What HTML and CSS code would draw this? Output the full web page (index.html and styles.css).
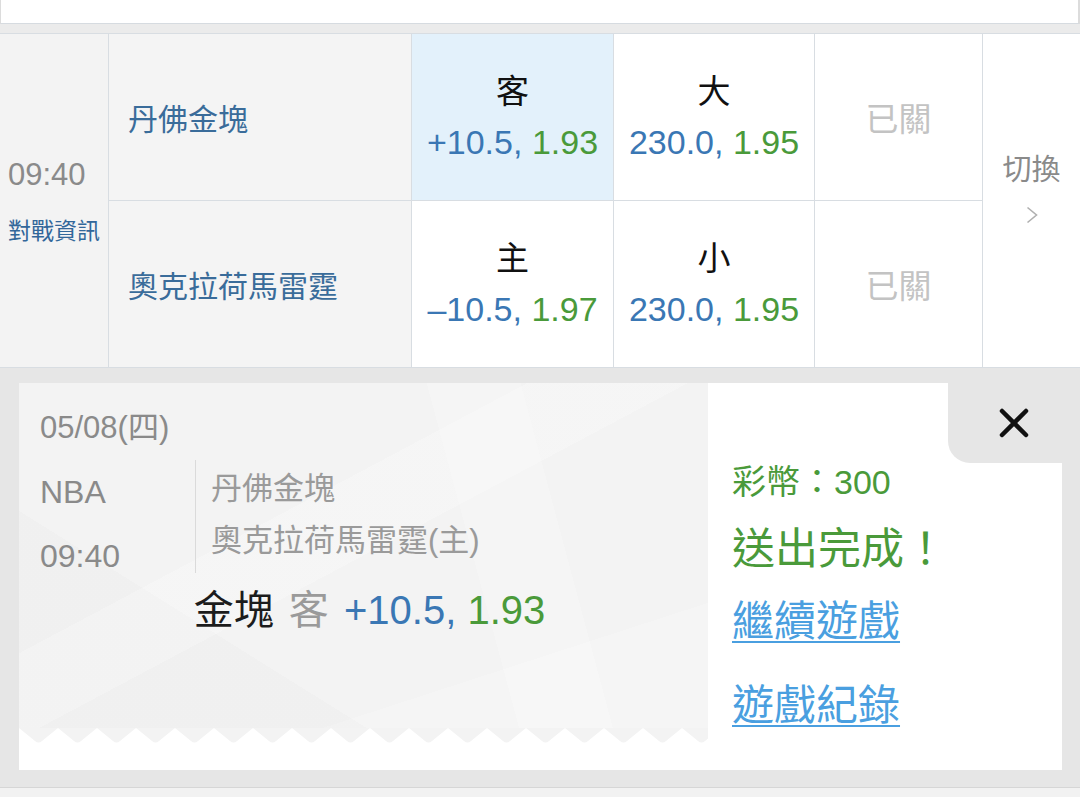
FILE: index.html
```html
<!DOCTYPE html>
<html>
<head>
<meta charset="utf-8">
<title>NBA 投注</title>
<link rel="stylesheet" href="styles.css">
</head>
<body>
<div class="page">
  <div class="prev-row"></div>
  <div class="gap-strip"></div>

  <div class="match">
    <div class="cell time-cell">
      <div class="time">09:40</div>
      <div class="info-link">對戰資訊</div>
    </div>
    <div class="cell team">丹佛金塊</div>
    <div class="cell odds picked">
      <div class="side">客</div>
      <div class="line"><span class="num">+10.5,</span> <span class="price">1.93</span></div>
    </div>
    <div class="cell odds">
      <div class="side">大</div>
      <div class="line"><span class="num">230.0,</span> <span class="price">1.95</span></div>
    </div>
    <div class="cell closed">已關</div>
    <div class="cell switch">
      <div class="switch-text">切換</div>
      <svg class="chevron" width="12" height="18" viewBox="0 0 12 18"><polyline points="1.5,1.5 10.5,9 1.5,16.5" fill="none" stroke="#b0b0b0" stroke-width="1.6"/></svg>
    </div>

    <div class="cell team">奧克拉荷馬雷霆</div>
    <div class="cell odds">
      <div class="side">主</div>
      <div class="line"><span class="num">&ndash;10.5,</span> <span class="price">1.97</span></div>
    </div>
    <div class="cell odds">
      <div class="side">小</div>
      <div class="line"><span class="num">230.0,</span> <span class="price">1.95</span></div>
    </div>
    <div class="cell closed">已關</div>
  </div>

  <div class="ticket-area">
    <div class="ticket">
      <div class="ticket-main">
        <div class="ticket-body">
          <div class="ticket-date">05/08(四)</div>
          <div class="ticket-info">
            <div class="ticket-meta">
              <div>NBA</div>
              <div>09:40</div>
            </div>
            <div class="ticket-teams">
              <div>丹佛金塊</div>
              <div>奧克拉荷馬雷霆(主)</div>
            </div>
          </div>
          <div class="ticket-pick">
            <span class="pick-team">金塊</span>
            <span class="pick-side">客</span>
            <span class="num">+10.5,</span> <span class="price">1.93</span>
          </div>
        </div>
        <svg class="zigzag" width="689" height="16">
          <defs>
            <pattern id="teeth" width="39" height="16" patternUnits="userSpaceOnUse">
              <path d="M0 0H39L23 13Q19.5 16 16 13Z" fill="#f3f3f3"/>
            </pattern>
          </defs>
          <rect width="689" height="16" fill="url(#teeth)"/>
        </svg>
      </div>

      <div class="ticket-side">
        <button class="close-tab">
          <svg width="30" height="30" viewBox="0 0 30 30"><path d="M3 3L27 27M27 3L3 27" stroke="#111" stroke-width="4.5" stroke-linecap="round"/></svg>
        </button>
        <div class="coins">彩幣：300</div>
        <div class="done">送出完成！</div>
        <a class="ticket-link first" href="#">繼續遊戲</a>
        <a class="ticket-link" href="#">遊戲紀錄</a>
      </div>
    </div>
  </div>

  <div class="next-row"></div>
</div>
</body>
</html>
```
FILE: styles.css
```css
body {
  margin: 0;
  background-color: #e6e6e6;
  font-family: "Liberation Sans", "Noto Sans CJK TC", sans-serif;
}

.page {
  width: 1080px;
  height: 797px;
  overflow: hidden;
}

.prev-row {
  height: 24px;
  box-sizing: border-box;
  background-color: #ffffff;
  border-left: 1px solid #dcdcdc;
  border-right: 2px solid #dcdcdc;
  border-bottom: 1px solid #d6dbe0;
}

.gap-strip {
  height: 9px;
  background-color: #ebebeb;
}

/* match table */
.match {
  display: grid;
  grid-template-columns: 108px 302px 201px 200px 167px 97px;
  grid-template-rows: 166px 166px;
  gap: 1px;
  background-color: #d8dde2;
  border-top: 1px solid #d8dde2;
  border-bottom: 1px solid #d8dde2;
}

.cell {
  background-color: #ffffff;
}

.time-cell {
  grid-row: 1 / 3;
  background-color: #f3f3f3;
  display: flex;
  flex-direction: column;
  justify-content: center;
  padding-left: 8px;
}

.time {
  font-size: 31px;
  line-height: 40px;
  color: #8a8a8a;
}

.info-link {
  margin-top: 20px;
  font-size: 23px;
  line-height: 32px;
  color: #32679a;
}

.team {
  background-color: #f4f4f4;
  display: flex;
  align-items: center;
  padding-left: 19px;
  font-size: 30px;
  color: #3a6c9a;
}

.odds {
  display: flex;
  flex-direction: column;
  justify-content: center;
  align-items: center;
}

.odds.picked {
  background-color: #e3f1fb;
}

.side {
  font-size: 33px;
  line-height: 50px;
  color: #111111;
}

.line {
  font-size: 34px;
  line-height: 50px;
  white-space: nowrap;
}

.num {
  color: #3a77b4;
}

.price {
  color: #4a9a3a;
}

.closed {
  display: flex;
  align-items: center;
  justify-content: center;
  font-size: 33px;
  color: #c3c3c3;
}

.switch {
  grid-column: 6;
  grid-row: 1 / 3;
  display: flex;
  flex-direction: column;
  align-items: center;
  justify-content: center;
  padding-bottom: 27px;
}

.switch-text {
  font-size: 29px;
  line-height: 40px;
  color: #8a8a8a;
}

.chevron {
  margin-top: 16px;
  display: block;
}

/* ticket popup */
.ticket-area {
  padding: 15px 18px 17px 19px;
  background-color: #e6e6e6;
}

.ticket {
  position: relative;
  display: flex;
  height: 387px;
  background-color: #ffffff;
}

.ticket-main {
  width: 689px;
}

.ticket-body {
  height: 345px;
  box-sizing: border-box;
  padding-top: 25px;
  background-color: #f3f3f3;
  background-image:
    linear-gradient(152deg, rgba(255,255,255,0) 0 38%, rgba(255,255,255,.22) 38% 50%, rgba(255,255,255,0) 50%),
    linear-gradient(32deg, rgba(0,0,0,.012) 0 28%, rgba(0,0,0,0) 28%),
    linear-gradient(-18deg, rgba(255,255,255,.2) 0 22%, rgba(255,255,255,0) 22%),
    linear-gradient(75deg, rgba(255,255,255,0) 0 64%, rgba(255,255,255,.2) 64% 76%, rgba(255,255,255,0) 76%);
}

.zigzag {
  display: block;
}

.ticket-date {
  padding-left: 21px;
  font-size: 31px;
  line-height: 40px;
  color: #8a8a8a;
}

.ticket-info {
  display: flex;
  margin-top: 12px;
  height: 113px;
  padding-left: 21px;
}

.ticket-meta {
  width: 155px;
  border-right: 1px solid #dadada;
  font-size: 32px;
  line-height: 64px;
  color: #8a8a8a;
}

.ticket-teams {
  padding: 3px 0 0 15px;
  font-size: 31px;
  line-height: 52px;
  color: #9a9a9a;
}

.ticket-pick {
  margin-top: 13px;
  text-align: center;
  padding-left: 12px;
  font-size: 40px;
  line-height: 48px;
  white-space: nowrap;
}

.pick-team {
  color: #1c1c1c;
}

.pick-side {
  color: #9a9a9a;
  margin: 0 4px;
}

.ticket-side {
  flex: 1;
  display: flex;
  flex-direction: column;
  align-items: flex-start;
  padding: 77px 0 0 24px;
}

.close-tab {
  position: absolute;
  top: 0;
  right: -18px;
  width: 132px;
  height: 80px;
  border: none;
  padding: 0;
  background-color: #e6e6e6;
  border-bottom-left-radius: 22px;
  display: flex;
  align-items: center;
  justify-content: center;
}

.coins {
  font-size: 34px;
  line-height: 44px;
  color: #4a9a3a;
}

.done {
  margin-top: 17px;
  font-size: 43px;
  line-height: 56px;
  color: #4a9a3a;
}

.ticket-link {
  margin-top: 28px;
  font-size: 42px;
  line-height: 56px;
  color: #4a9fe0;
  text-decoration: underline;
  text-decoration-thickness: 2px;
  text-underline-offset: 5px;
}

.ticket-link.first {
  margin-top: 17px;
}

.next-row {
  height: 20px;
  background-color: #f2f2f2;
  border-top: 1px solid #d6d6d6;
}
```
